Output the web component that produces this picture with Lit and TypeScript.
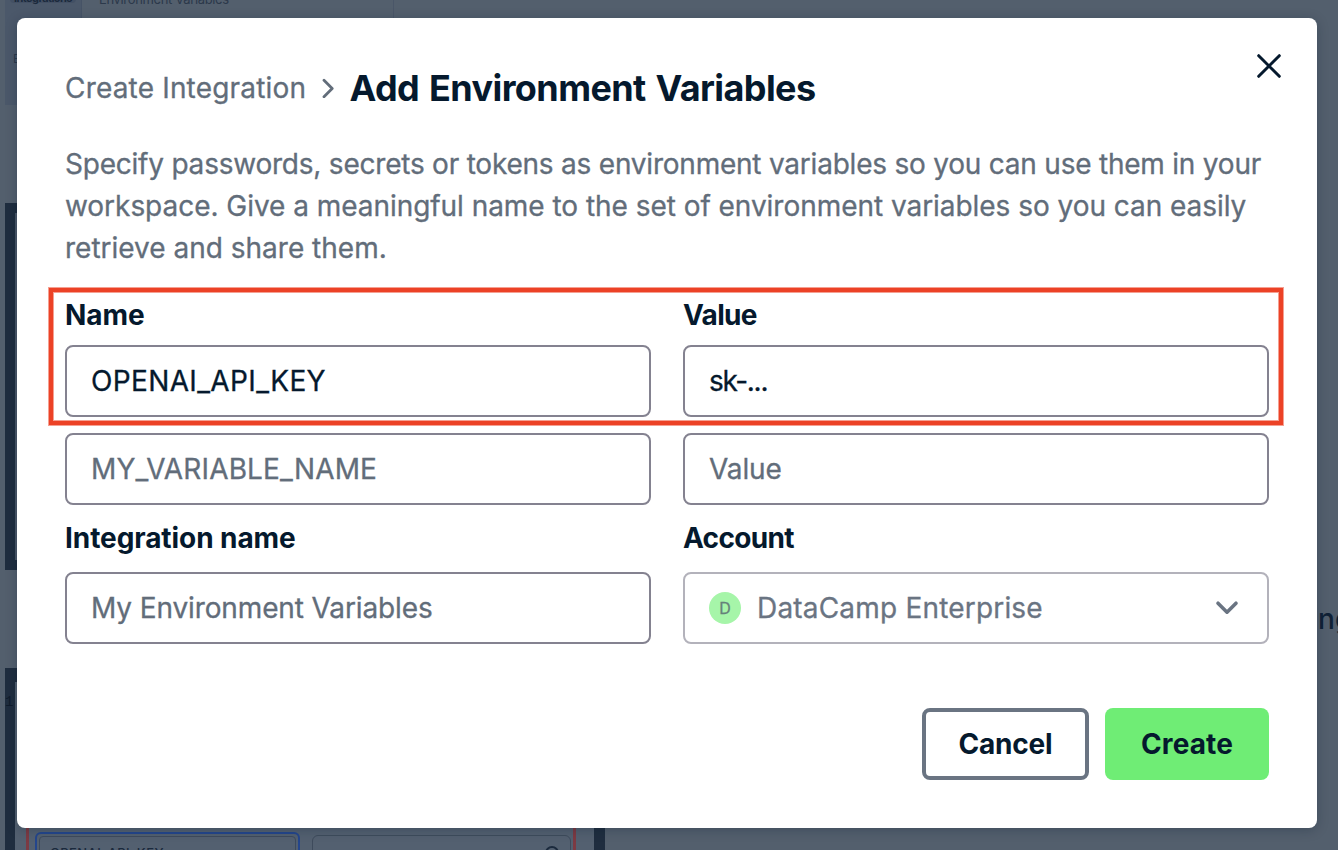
import { LitElement, html, css } from "lit";
import { customElement, property } from "lit/decorators.js";

@customElement("text-field")
class TextField extends LitElement {
  @property() value = "";
  @property() placeholder = "";

  static styles = css`
    :host { display: block; }
    .box {
      box-sizing: border-box; height: 72px; padding: 0 24px;
      display: flex; align-items: center;
      border: 2px solid #848290; border-radius: 8px; background: #fff;
      font-size: 28px; line-height: 36px; letter-spacing: -0.12px; color: #05192d;
      -webkit-text-stroke: 0.3px currentColor; white-space: nowrap;
    }
    .wide { letter-spacing: 0.36px; }
    .short { letter-spacing: -1.3px; }
    .empty { color: #626d7a; }
    .empty.wide { letter-spacing: 0.15px; }
  `;

  render() {
    const text = this.value || this.placeholder;
    const spacing = text.includes("_") ? "wide" : text.includes("...") ? "short" : "";
    return html`<div class="box ${this.value ? "" : "empty"} ${spacing}">${text}</div>`;
  }
}

@customElement("page-behind")
class PageBehind extends LitElement {
  static styles = css`
    :host {
      display: grid; grid-template-columns: 600px 1fr; column-gap: 18px;
      width: 1338px; height: 850px; padding-left: 5px; box-sizing: border-box;
      overflow: hidden; background: #535f6d; color: #1b2a3d;
    }
    .figures { display: flex; flex-direction: column; min-width: 0; }
    .app { height: 105px; display: flex; margin-bottom: 98px; flex: none; }
    .side { width: 77px; box-sizing: border-box; padding: 0 5px; background: #4b586a; border-right: 1px solid #465366; }
    .nav {
      height: 12px; border-radius: 0 0 4px 4px; background: #435064;
      font-size: 11px; font-weight: 700; line-height: 14px; letter-spacing: -0.58px;
      padding-left: 4px; white-space: nowrap;
    }
    .nav span, .crumb span { display: block; margin-top: -9px; }
    .letter { font-size: 12px; line-height: 14px; padding: 49px 0 0 3px; color: #2c394b; }
    .crumb {
      width: 312px; height: 18px; box-sizing: border-box; padding-left: 17px; border-right: 1px solid #4a5668;
      font-size: 13px; line-height: 16px; letter-spacing: -0.35px; color: #2c394b;
    }
    .shot { box-sizing: border-box; flex: none; }
    .first { height: 367px; margin-bottom: 98px; border: 10px solid #1f2d3f; background: #4a5768; }
    .second { height: 220px; display: flex; flex-direction: column; background: #1f2d3f; }
    .mark { font: 14px "Liberation Mono", monospace; color: #101c2c; line-height: 16px; height: 16px; padding-top: 26px; }
    .panel { margin: -28px 11px 0 10px; flex: 1; background: #536070; padding: 128px 18px 0 11px; }
    .frame {
      height: 80px; border: 0 solid #7c3a43; border-width: 0 3px; box-sizing: border-box;
      display: flex; gap: 12px; padding: 22px 3px 0 6px;
    }
    .fake { box-sizing: border-box; height: 60px; border-radius: 6px; border: 1px solid #3e4b5c; flex: none; }
    .focus { width: 265px; border: 2px solid #24468c; padding: 2px; }
    .inner {
      height: 52px; border: 1px solid #3e4b5c; border-radius: 4px; box-sizing: border-box;
      padding: 8px 0 0 10px; font-size: 13px; font-weight: 500; line-height: 16px;
      letter-spacing: 0.4px; white-space: nowrap;
    }
    .plain { width: 259px; margin-top: 3px; display: flex; justify-content: flex-end; padding: 9px 9px; }
    .more { font-size: 28px; font-weight: 500; line-height: 36px; color: #0f2136; padding-top: 601px; text-indent: 688px; white-space: nowrap; }
  `;

  render() {
    return html`
      <div class="figures">
        <div class="app">
          <div class="side">
            <div class="nav"><span>Integrations</span></div>
            <div class="letter">E</div>
          </div>
          <div class="crumb"><span>Environment Variables</span></div>
        </div>
        <div class="shot first"></div>
        <div class="shot second">
          <div class="mark">1.</div>
          <div class="panel">
            <div class="frame">
              <div class="fake focus"><div class="inner">OPENAI_API_KEY</div></div>
              <div class="fake plain">
                <svg width="18" height="18" viewBox="0 0 18 18" fill="none" stroke="#1b2a3d" stroke-width="2">
                  <circle cx="9" cy="8" r="6" /><path d="M13 13l4 4" />
                </svg>
              </div>
            </div>
          </div>
        </div>
      </div>
      <div class="more">ing</div>
    `;
  }
}

@customElement("app-root")
class AppRoot extends LitElement {
  static styles = css`
    :host {
      display: block; position: relative; width: 1338px; height: 850px; overflow: hidden;
      font-family: Inter, "Open Sans", sans-serif; color: #05192d;
    }
    .dialog {
      position: absolute; left: 17px; top: 18px; width: 1300px; height: 810px;
      box-sizing: border-box; padding: 48px; border-radius: 8px; background: #fff;
      box-shadow: 0 2px 12px rgba(5, 25, 45, 0.25);
    }
    .close { position: absolute; right: 36px; top: 36px; width: 24px; height: 24px; display: block; }
    .header { display: flex; align-items: center; height: 44px; margin-bottom: 33px; }
    .step, .intro, .account { -webkit-text-stroke: 0.3px currentColor; }
    .step { font-size: 28px; letter-spacing: 0.18px; color: #626d7a; width: 241px; white-space: nowrap; }
    .chevron { margin: 0 14.5px 0 15px; display: block; }
    h1 { margin: 0; font-size: 36px; line-height: 44px; font-weight: 700; letter-spacing: -0.6px; word-spacing: 2px; white-space: nowrap; }
    .intro { margin: 0; font-size: 28px; line-height: 42px; color: #626d7a; white-space: nowrap; }
    .l1 { letter-spacing: -0.22px; }
    .l2 { letter-spacing: -0.04px; }
    .l3 { letter-spacing: 0; }
    .grid { display: grid; grid-template-columns: 586px 586px; column-gap: 32px; margin-top: 32px; }
    .label { font-size: 28px; line-height: 28px; font-weight: 700; height: 28px; letter-spacing: -0.08px; }
    .top { margin-bottom: 16px; }
    .low { margin: 19px 0 20px; }
    .next { margin-top: 16px; }
    .tight { letter-spacing: -0.67px; }
    .select {
      box-sizing: border-box; height: 72px; padding: 0 28px 0 24px; display: flex; align-items: center;
      border: 2px solid #b3b2bb; border-radius: 8px;
    }
    .avatar {
      width: 32px; height: 32px; border-radius: 50%; background: #a6f5a9; color: #65817a;
      display: flex; align-items: center; justify-content: center; font-size: 16px; line-height: 16px;
      -webkit-text-stroke: 0.3px currentColor;
    }
    .account { flex: 1; margin-left: 16px; font-size: 28px; letter-spacing: 0.19px; color: #6a7482; }
    .actions { display: flex; justify-content: flex-end; gap: 16px; margin-top: 64px; }
    .btn {
      box-sizing: border-box; height: 72px; border-radius: 8px; display: flex; align-items: center; justify-content: center;
      font-size: 28px; font-weight: 700; letter-spacing: 0.1px;
    }
    .cancel { width: 167px; border: 4px solid #6a7482; letter-spacing: -0.2px; }
    .create { width: 164px; background: #6fed75; }
    .highlight {
      position: absolute; left: 32px; top: 270px; width: 1234px; height: 137px;
      box-sizing: border-box; border: 4px solid #ec4226;
      box-shadow: 0 0 0 1px rgba(236, 66, 38, 0.5), inset 0 0 0 1px rgba(236, 66, 38, 0.5);
    }
  `;

  render() {
    return html`
      <page-behind></page-behind>
      <div class="dialog">
        <svg class="close" viewBox="0 0 24 24" fill="none" stroke="#05192d" stroke-width="3" stroke-linecap="round">
          <path d="M1.7 1.7l20.6 20.6M22.3 1.7L1.7 22.3" />
        </svg>
        <div class="header">
          <span class="step">Create Integration</span>
          <svg class="chevron" width="14" height="20" viewBox="0 0 14 20" fill="none" stroke="#626d7a" stroke-width="2.8" stroke-linecap="round" stroke-linejoin="round">
            <path d="M3 2.3l8.2 8.2L3 18.7" />
          </svg>
          <h1>Add Environment Variables</h1>
        </div>
        <p class="intro">
          <span class="l1">Specify passwords, secrets or tokens as environment variables so you can use them in your</span><br />
          <span class="l2">workspace. Give a meaningful name to the set of environment variables so you can easily</span><br />
          <span class="l3">retrieve and share them.</span>
        </p>
        <div class="grid">
          <div class="label top">Name</div>
          <div class="label top tight">Value</div>
          <text-field value="OPENAI_API_KEY"></text-field>
          <text-field value="sk-..."></text-field>
          <text-field class="next" placeholder="MY_VARIABLE_NAME"></text-field>
          <text-field class="next" placeholder="Value"></text-field>
          <div class="label low">Integration name</div>
          <div class="label low tight">Account</div>
          <text-field placeholder="My Environment Variables"></text-field>
          <div class="select">
            <span class="avatar">D</span>
            <span class="account">DataCamp Enterprise</span>
            <svg width="24" height="16" viewBox="0 0 24 16" fill="none" stroke="#6a7482" stroke-width="3.6" stroke-linecap="round" stroke-linejoin="round">
              <path d="M3 3.2l9 9 9-9" />
            </svg>
          </div>
        </div>
        <div class="actions">
          <div class="btn cancel">Cancel</div>
          <div class="btn create">Create</div>
        </div>
        <div class="highlight"></div>
      </div>
    `;
  }
}
